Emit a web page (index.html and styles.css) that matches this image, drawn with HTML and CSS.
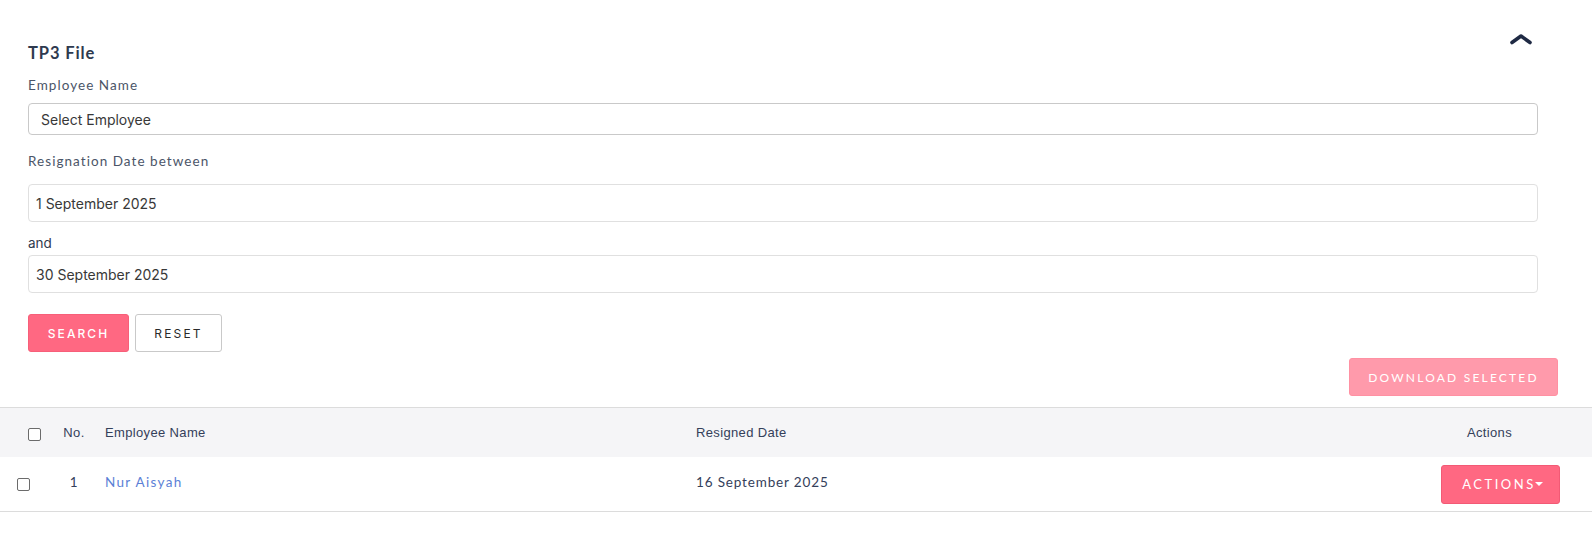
FILE: index.html
```html
<!DOCTYPE html>
<html>
<head>
<meta charset="utf-8">
<link rel="stylesheet" href="styles.css">
</head>
<body>
<div class="panel">
  <div class="panel-head">
    <h2 class="title">TP3 File</h2>
    <button class="collapse" aria-label="Collapse">
      <svg width="24" height="12" viewBox="0 0 24 12"><path d="M3 9.5 L12 3 L21 9.5" fill="none" stroke="#1f2a44" stroke-width="3.6" stroke-linecap="round" stroke-linejoin="round"/></svg>
    </button>
  </div>
  <div class="form">
    <label class="label l1">Employee Name</label>
    <div class="input i1">Select Employee</div>
    <label class="label l2">Resignation Date between</label>
    <div class="input i2">1 September 2025</div>
    <label class="label-and">and</label>
    <div class="input i3">30 September 2025</div>
    <div class="btns">
      <button class="btn btn-primary">SEARCH</button>
      <button class="btn btn-default">RESET</button>
    </div>
  </div>
  <div class="dl-row">
    <button class="btn btn-disabled">DOWNLOAD SELECTED</button>
  </div>
</div>
<div class="table">
  <div class="tr th">
    <div class="cell c-check hc"><span class="cb"></span></div>
    <div class="cell c-no">No.</div>
    <div class="cell c-name">Employee Name</div>
    <div class="cell c-date">Resigned Date</div>
    <div class="cell c-act">Actions</div>
  </div>
  <div class="tr td">
    <div class="cell c-check rc"><span class="cb"></span></div>
    <div class="cell c-no">1</div>
    <div class="cell c-name"><a class="link">Nur Aisyah</a></div>
    <div class="cell c-date">16 September 2025</div>
    <div class="cell c-act"><button class="btn btn-actions">ACTIONS<span class="caret"></span></button></div>
  </div>
</div>
</body>
</html>
```
FILE: styles.css
```css
* { box-sizing: border-box; }
html, body { margin: 0; padding: 0; background: #fff; }
body { font-family: Lato, "Liberation Sans", sans-serif; color: #2f3a4d; width: 1592px; }

.panel { padding: 0 54px 0 28px; }
.panel-head { display: flex; justify-content: space-between; align-items: flex-start; padding-top: 43px; }
.title { margin: 0; font-size: 16.5px; line-height: 20px; font-weight: 700; letter-spacing: 0.9px; color: #2e3a4f; }
.collapse { border: 0; background: none; padding: 0; margin: -10px 5px 0 0; width: 24px; height: 12px; display: block; }
.collapse svg { display: block; }

.form { display: flex; flex-direction: column; align-items: stretch; }
.label { display: block; font-size: 13.5px; line-height: 18px; letter-spacing: 1.05px; color: #4b5568; }
.l1 { margin-top: 13px; }
.l2 { margin-top: 17px; }
.label-and { display: block; margin-top: 12px; font-family: Inter, sans-serif; font-size: 13.5px; line-height: 18px; color: #2f3a4d; }

.input { border: 1px solid #d2d2d2; border-radius: 4px; font-family: Inter, sans-serif; font-size: 14px; color: #383838; display: flex; align-items: center; background: #fff; }
.i1 { margin-top: 9px; height: 32px; padding-left: 12px; border-color: #c9c9c9; }
.i2 { margin-top: 14px; height: 38px; padding-left: 7px; border-color: #e0e0e0; }
.i3 { margin-top: 3px; height: 38px; padding-left: 7px; border-color: #e0e0e0; }

.btns { display: flex; gap: 6px; margin-top: 21px; }
.btn { border-radius: 3px; font-size: 12px; letter-spacing: 2.4px; cursor: pointer; display: inline-flex; align-items: center; justify-content: center; }
.btn-primary { width: 101px; height: 38px; background: #ff6882; border: 1px solid #f75f79; color: #fff; font-family: Inter, sans-serif; font-weight: 500; letter-spacing: 2.1px; }
.btn-default { width: 87px; height: 38px; background: #fff; border: 1px solid #c9c9c9; color: #2a2a2a; font-family: Inter, sans-serif; font-weight: 400; letter-spacing: 2.2px; }

.dl-row { display: flex; justify-content: flex-end; margin-top: 6px; margin-right: -20px; }
.btn-disabled { width: 209px; height: 38px; background: #ff9aab; border: 1px solid #ff91a3; color: #fff; font-family: Lato, sans-serif; font-size: 12px; letter-spacing: 2.2px; }

.table { margin-top: 11px; border-top: 1px solid #dcdcdc; }
.tr { display: grid; grid-template-columns: 52px 44px 600px 1fr 200px; align-items: center; }
.th { height: 49px; background: #f5f5f7; font-family: "Liberation Sans", Arial, sans-serif; font-size: 13px; letter-spacing: 0.35px; color: #34405a; }
.td { height: 55px; border-bottom: 1px solid #dcdcdc; font-size: 13.5px; letter-spacing: 0.85px; color: #34405a; }
.cell { white-space: nowrap; }
.td .c-no, .td .c-name, .td .c-date { padding-bottom: 5px; }
.c-no { text-align: center; }
.c-name { padding-left: 9px; }
.hc { padding-left: 28px; padding-top: 3px; }
.rc { padding-left: 17px; padding-top: 1px; }
.cb { display: block; width: 13px; height: 13px; border: 1px solid #6b6b6b; border-radius: 2px; background: #fff; }
.th .c-act { text-align: right; padding-right: 80px; }
.td .c-act { display: flex; justify-content: flex-end; padding-right: 32px; }
.link { color: #5b7fd6; text-decoration: none; letter-spacing: 1.3px; }

.btn-actions { width: 119px; height: 39px; background: #ff6882; border: 1px solid #f25a75; color: #fff; font-family: Lato, sans-serif; font-size: 13px; letter-spacing: 2.5px; padding: 0 0 0 4px; }
.caret { display: inline-block; width: 0; height: 0; border-left: 4px solid transparent; border-right: 4px solid transparent; border-top: 4px solid #fff; margin-left: -1px; vertical-align: middle; }
```
